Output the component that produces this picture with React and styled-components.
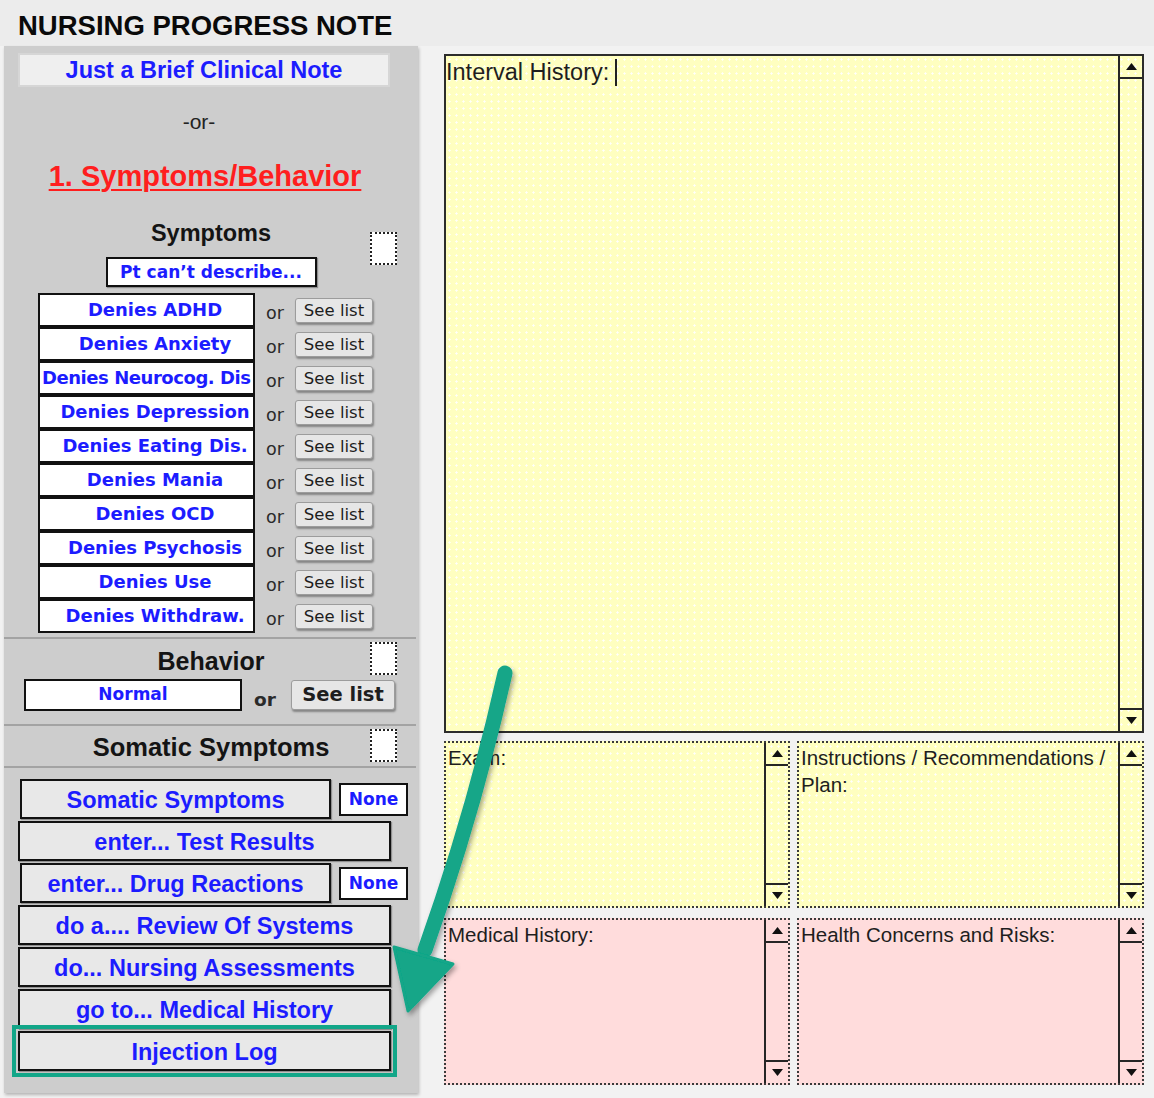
import React from 'react';
import styled, { createGlobalStyle, css } from 'styled-components';

const BLUE = '#1c1cff';
const TEAL = '#12a688';
const ARIAL = '"Liberation Sans", Arial, sans-serif';
const TAHOMA = '"DejaVu Sans", Tahoma, Verdana, sans-serif';

const Global = createGlobalStyle`
  html, body { margin: 0; padding: 0; background: #ececec; }
  body { font-family: ${ARIAL}; }
  * { box-sizing: border-box; }
`;

const Page = styled.div`
  position: relative;
  width: 1154px;
  height: 1098px;
  overflow: hidden;
  background: #ececec;
  display: flex;
  flex-direction: column;
`;

const Header = styled.header`
  height: 46px;
  flex: none;
  display: flex;
  align-items: center;
  padding: 5px 0 0 18px;
`;

const Title = styled.h1`
  margin: 0;
  font: bold 27.5px/1 ${ARIAL};
  color: #0a0a0a;
`;

const Body = styled.div`
  flex: 1;
  display: flex;
  align-items: flex-start;
  background: #f2f2f2;
`;

const LeftPanel = styled.aside`
  width: 414px;
  height: 1047px;
  margin-left: 4px;
  background: #cdcdcd;
  box-shadow: 1px 2px 3px rgba(0, 0, 0, 0.25);
  display: flex;
  flex-direction: column;
`;

const BriefButton = styled.div`
  margin: 7px 0 0 14px;
  width: 372px;
  height: 34px;
  background: #efefef;
  border: 2px solid #d6d6d6;
  display: flex;
  align-items: center;
  justify-content: center;
  font: bold 23.5px ${ARIAL};
  color: ${BLUE};
  white-space: nowrap;
`;

const OrText = styled.div`
  margin-top: 20px;
  height: 30px;
  text-align: center;
  padding-right: 24px;
  font: 21px/30px ${ARIAL};
  color: #222;
`;

const RedHeading = styled.div`
  margin-top: 21px;
  height: 36px;
  text-align: center;
  padding-right: 12px;
  font: bold 29px/36px ${ARIAL};
  color: #ff1e1e;
  text-decoration: underline;
  text-decoration-thickness: 2px;
  text-underline-offset: 3px;
  white-space: nowrap;
`;

const SectionHead = styled.div`
  display: grid;
  grid-template-columns: 1fr auto 1fr;
  align-items: start;
  margin-top: ${p => p.$top || 0}px;
`;

const Heading = styled.div`
  grid-column: 2;
  grid-row: 1;
  margin-top: ${p => p.$top || 0}px;
  font: bold ${p => p.$size || 24}px/30px ${ARIAL};
  color: #141414;
  text-align: center;
  white-space: nowrap;
`;

const CheckBox = styled.div`
  grid-column: 3;
  grid-row: ${p => p.$rows || '1'};
  justify-self: end;
  margin: ${p => p.$top || 0}px 21px 0 0;
  width: 27px;
  height: 33px;
  background: #fff;
  border: 2px dotted #222;
`;

const PtButton = styled.div`
  grid-column: 2;
  grid-row: 2;
  margin-top: 9px;
  width: 211px;
  height: 30px;
  justify-self: center;
  background: #fff;
  border: 2px solid #111;
  box-shadow: 1px 1px 1px rgba(0, 0, 0, 0.3);
  font: bold 17px/26px ${TAHOMA};
  color: ${BLUE};
  text-align: center;
  white-space: nowrap;
`;

const DenyList = styled.div`
  margin-top: 6px;
  padding-left: 34px;
  display: grid;
  grid-template-columns: 217px 40px 78px;
  grid-auto-rows: 34px;
  align-items: center;
`;

const DenyButton = styled.div`
  height: 34px;
  background: #fff;
  border: 2px solid #111;
  overflow: hidden;
`;

const DenyLabel = styled.span`
  display: block;
  width: ${p => (p.$fit ? 'auto' : '230px')};
  padding-left: ${p => (p.$fit ? 2 : 0)}px;
  letter-spacing: ${p => (p.$fit ? '-0.45px' : 'normal')};
  font: bold 18px/29px ${TAHOMA};
  color: ${BLUE};
  text-align: ${p => (p.$fit ? 'left' : 'center')};
  white-space: nowrap;
`;

const OrSmall = styled.div`
  text-align: center;
  padding-top: 5px;
  font: ${p => (p.$bold ? 'bold 18.5px' : '17.5px')} / 22px ${TAHOMA};
  color: #2a2a2a;
`;

const seeListBase = css`
  background: #e6e6e6;
  border: 1px solid #9c9c9c;
  border-radius: 3px;
  box-shadow: 1px 2px 2px rgba(0, 0, 0, 0.35);
  color: #1e1e1e;
  text-align: center;
  white-space: nowrap;
`;

const SeeList = styled.div`
  ${seeListBase};
  width: 78px;
  height: 25px;
  font: 16.5px/23px ${TAHOMA};
`;

const Separator = styled.hr`
  margin: ${p => p.$top || 0}px 0 0 0;
  border: 0;
  border-top: 2px solid #a3a3a3;
  height: 0;
  width: 412px;
`;

const BehaviorRow = styled.div`
  display: flex;
  align-items: center;
  margin-top: 3px;
  padding-left: 20px;
  height: 32px;
`;

const NormalBox = styled.div`
  width: 218px;
  height: 32px;
  background: #fff;
  border: 2px solid #111;
  font: bold 17px/27px ${TAHOMA};
  color: ${BLUE};
  text-align: center;
`;

const BehaviorOr = styled(OrSmall)`
  margin-left: 12px;
  width: 22px;
  padding-top: 10px;
`;

const BigSeeList = styled.div`
  ${seeListBase};
  margin-left: 15px;
  width: 104px;
  height: 30px;
  font: bold 19.5px/27px ${TAHOMA};
`;

const ActionList = styled.div`
  margin-top: 11px;
  padding-left: 14px;
  display: flex;
  flex-direction: column;
  gap: 2px;
`;

const ActionRow = styled.div`
  display: flex;
  align-items: center;
`;

const ActionButton = styled.div`
  width: ${p => (p.$narrow ? 311 : 373)}px;
  margin-left: ${p => (p.$narrow ? 2 : 0)}px;
  height: 40px;
  background: #e8e8e8;
  border: 2px solid #111;
  box-shadow: 1px 1px 1px rgba(0, 0, 0, 0.3);
  font: bold 23.5px/38px ${ARIAL};
  color: ${BLUE};
  text-align: center;
  white-space: nowrap;
  overflow: hidden;
  ${p =>
    p.$highlight &&
    css`
      outline: 4px solid ${TEAL};
      outline-offset: 2px;
      position: relative;
    `}
`;

const NoneBox = styled.div`
  margin-left: 8px;
  width: 69px;
  height: 33px;
  background: #fff;
  border: 2px solid #111;
  font: bold 17px/29px ${TAHOMA};
  color: ${BLUE};
  text-align: center;
`;

const RightPanel = styled.main`
  padding: 8px 0 0 26px;
  display: flex;
  flex-direction: column;
`;

const yellow = css`
  background-color: #ffffc0;
  background-image: radial-gradient(circle, rgba(255, 255, 255, 0.95) 0.9px, transparent 1.3px);
  background-size: 7px 7px;
`;
const pink = css`
  background-color: #ffdcdc;
`;

const IntervalBox = styled.section`
  width: 700px;
  height: 679px;
  border: 2px solid #2c2c2c;
  display: grid;
  grid-template-columns: 1fr 24px;
  ${yellow};
`;

const FieldText = styled.div`
  padding: ${p => (p.$big ? '2px 0' : '1px 2px')};
  font: ${p => (p.$big ? '23.5px/28px' : '20.5px/27px')} ${ARIAL};
  color: #1e1e1e;
  white-space: nowrap;
  overflow: hidden;
`;

const Caret = styled.span`
  display: inline-block;
  width: 2px;
  height: 27px;
  margin-left: 6px;
  background: #222;
  vertical-align: -6px;
`;

const SmallGrid = styled.div`
  margin-top: 8px;
  display: grid;
  grid-template-columns: 346px 347px;
  grid-template-rows: 167px 167px;
  column-gap: 7px;
  row-gap: 10px;
`;

const SmallBox = styled.section`
  border: 2px dotted #3a3a3a;
  display: grid;
  grid-template-columns: 1fr 24px;
  ${p => (p.$tone === 'pink' ? pink : yellow)};
`;

const Scrollbar = styled.div`
  display: flex;
  flex-direction: column;
  border-left: 2px solid #262626;
`;

const ScrollBtn = styled.div`
  height: 23px;
  display: flex;
  align-items: center;
  justify-content: center;
  ${p => (p.$dir === 'up' ? 'border-bottom' : 'border-top')}: 2px solid #262626;
`;

const Track = styled.div`
  flex: 1;
`;

const Overlay = styled.svg`
  position: absolute;
  left: 0;
  top: 0;
  width: 1154px;
  height: 1098px;
  pointer-events: none;
`;

const Tri = ({ dir }) => (
  <svg width="11" height="7" viewBox="0 0 11 7">
    {dir === 'up' ? <polygon points="0,7 5.5,0 11,7" fill="#111" /> : <polygon points="0,0 5.5,7 11,0" fill="#111" />}
  </svg>
);

const Scroll = () => (
  <Scrollbar>
    <ScrollBtn $dir="up"><Tri dir="up" /></ScrollBtn>
    <Track />
    <ScrollBtn $dir="down"><Tri dir="down" /></ScrollBtn>
  </Scrollbar>
);

const denies = [
  { label: 'Denies ADHD' },
  { label: 'Denies Anxiety' },
  { label: 'Denies Neurocog. Dis', fit: true },
  { label: 'Denies Depression' },
  { label: 'Denies Eating Dis.' },
  { label: 'Denies Mania' },
  { label: 'Denies OCD' },
  { label: 'Denies Psychosis' },
  { label: 'Denies Use' },
  { label: 'Denies Withdraw.' },
];

const actions = [
  { label: 'Somatic Symptoms', none: true },
  { label: 'enter...  Test Results' },
  { label: 'enter... Drug Reactions', none: true },
  { label: 'do a.... Review Of Systems' },
  { label: 'do... Nursing Assessments' },
  { label: 'go to... Medical History' },
  { label: 'Injection Log', highlight: true },
];

export default function App() {
  return (
    <Page>
      <Global />
      <Header>
        <Title>NURSING PROGRESS NOTE</Title>
      </Header>
      <Body>
        <LeftPanel>
          <BriefButton>Just a Brief Clinical Note</BriefButton>
          <OrText>-or-</OrText>
          <RedHeading>1. Symptoms/Behavior</RedHeading>

          <SectionHead $top={24}>
            <Heading $size={23.5}>Symptoms</Heading>
            <CheckBox $rows="1 / span 2" $top={14} />
            <PtButton>Pt can’t describe...</PtButton>
          </SectionHead>

          <DenyList>
            {denies.map(d => (
              <React.Fragment key={d.label}>
                <DenyButton>
                  <DenyLabel $fit={d.fit}>{d.label}</DenyLabel>
                </DenyButton>
                <OrSmall>or</OrSmall>
                <SeeList>See list</SeeList>
              </React.Fragment>
            ))}
          </DenyList>

          <Separator $top={4} />

          <SectionHead>
            <Heading $top={7} $size={25}>Behavior</Heading>
            <CheckBox $top={3} />
          </SectionHead>
          <BehaviorRow>
            <NormalBox>Normal</NormalBox>
            <BehaviorOr $bold>or</BehaviorOr>
            <BigSeeList>See list</BigSeeList>
          </BehaviorRow>

          <Separator $top={13} />

          <SectionHead>
            <Heading $top={6} $size={25.5}>Somatic Symptoms</Heading>
            <CheckBox $top={3} />
          </SectionHead>

          <Separator $top={4} />

          <ActionList>
            {actions.map(a => (
              <ActionRow key={a.label}>
                <ActionButton $narrow={a.none} $highlight={a.highlight}>{a.label}</ActionButton>
                {a.none && <NoneBox>None</NoneBox>}
              </ActionRow>
            ))}
          </ActionList>
        </LeftPanel>

        <RightPanel>
          <IntervalBox>
            <FieldText $big>
              Interval History:<Caret />
            </FieldText>
            <Scroll />
          </IntervalBox>
          <SmallGrid>
            <SmallBox>
              <FieldText>Exam:</FieldText>
              <Scroll />
            </SmallBox>
            <SmallBox>
              <FieldText>
                Instructions / Recommendations /<br />
                Plan:
              </FieldText>
              <Scroll />
            </SmallBox>
            <SmallBox $tone="pink">
              <FieldText>Medical History:</FieldText>
              <Scroll />
            </SmallBox>
            <SmallBox $tone="pink">
              <FieldText>Health Concerns and Risks:</FieldText>
              <Scroll />
            </SmallBox>
          </SmallGrid>
        </RightPanel>
      </Body>

      <Overlay viewBox="0 0 1154 1098">
        <defs>
          <filter id="sh" x="-20%" y="-20%" width="140%" height="140%">
            <feDropShadow dx="2" dy="3" stdDeviation="2.5" floodColor="#000" floodOpacity="0.35" />
          </filter>
        </defs>
        <g filter="url(#sh)">
          <path d="M 505 673 Q 474 812 425 950" stroke={TEAL} strokeWidth="15" strokeLinecap="round" fill="none" />
          <polygon points="394,947 453,964 408,1011" fill={TEAL} stroke={TEAL} strokeWidth="3" strokeLinejoin="round" />
        </g>
      </Overlay>
    </Page>
  );
}
